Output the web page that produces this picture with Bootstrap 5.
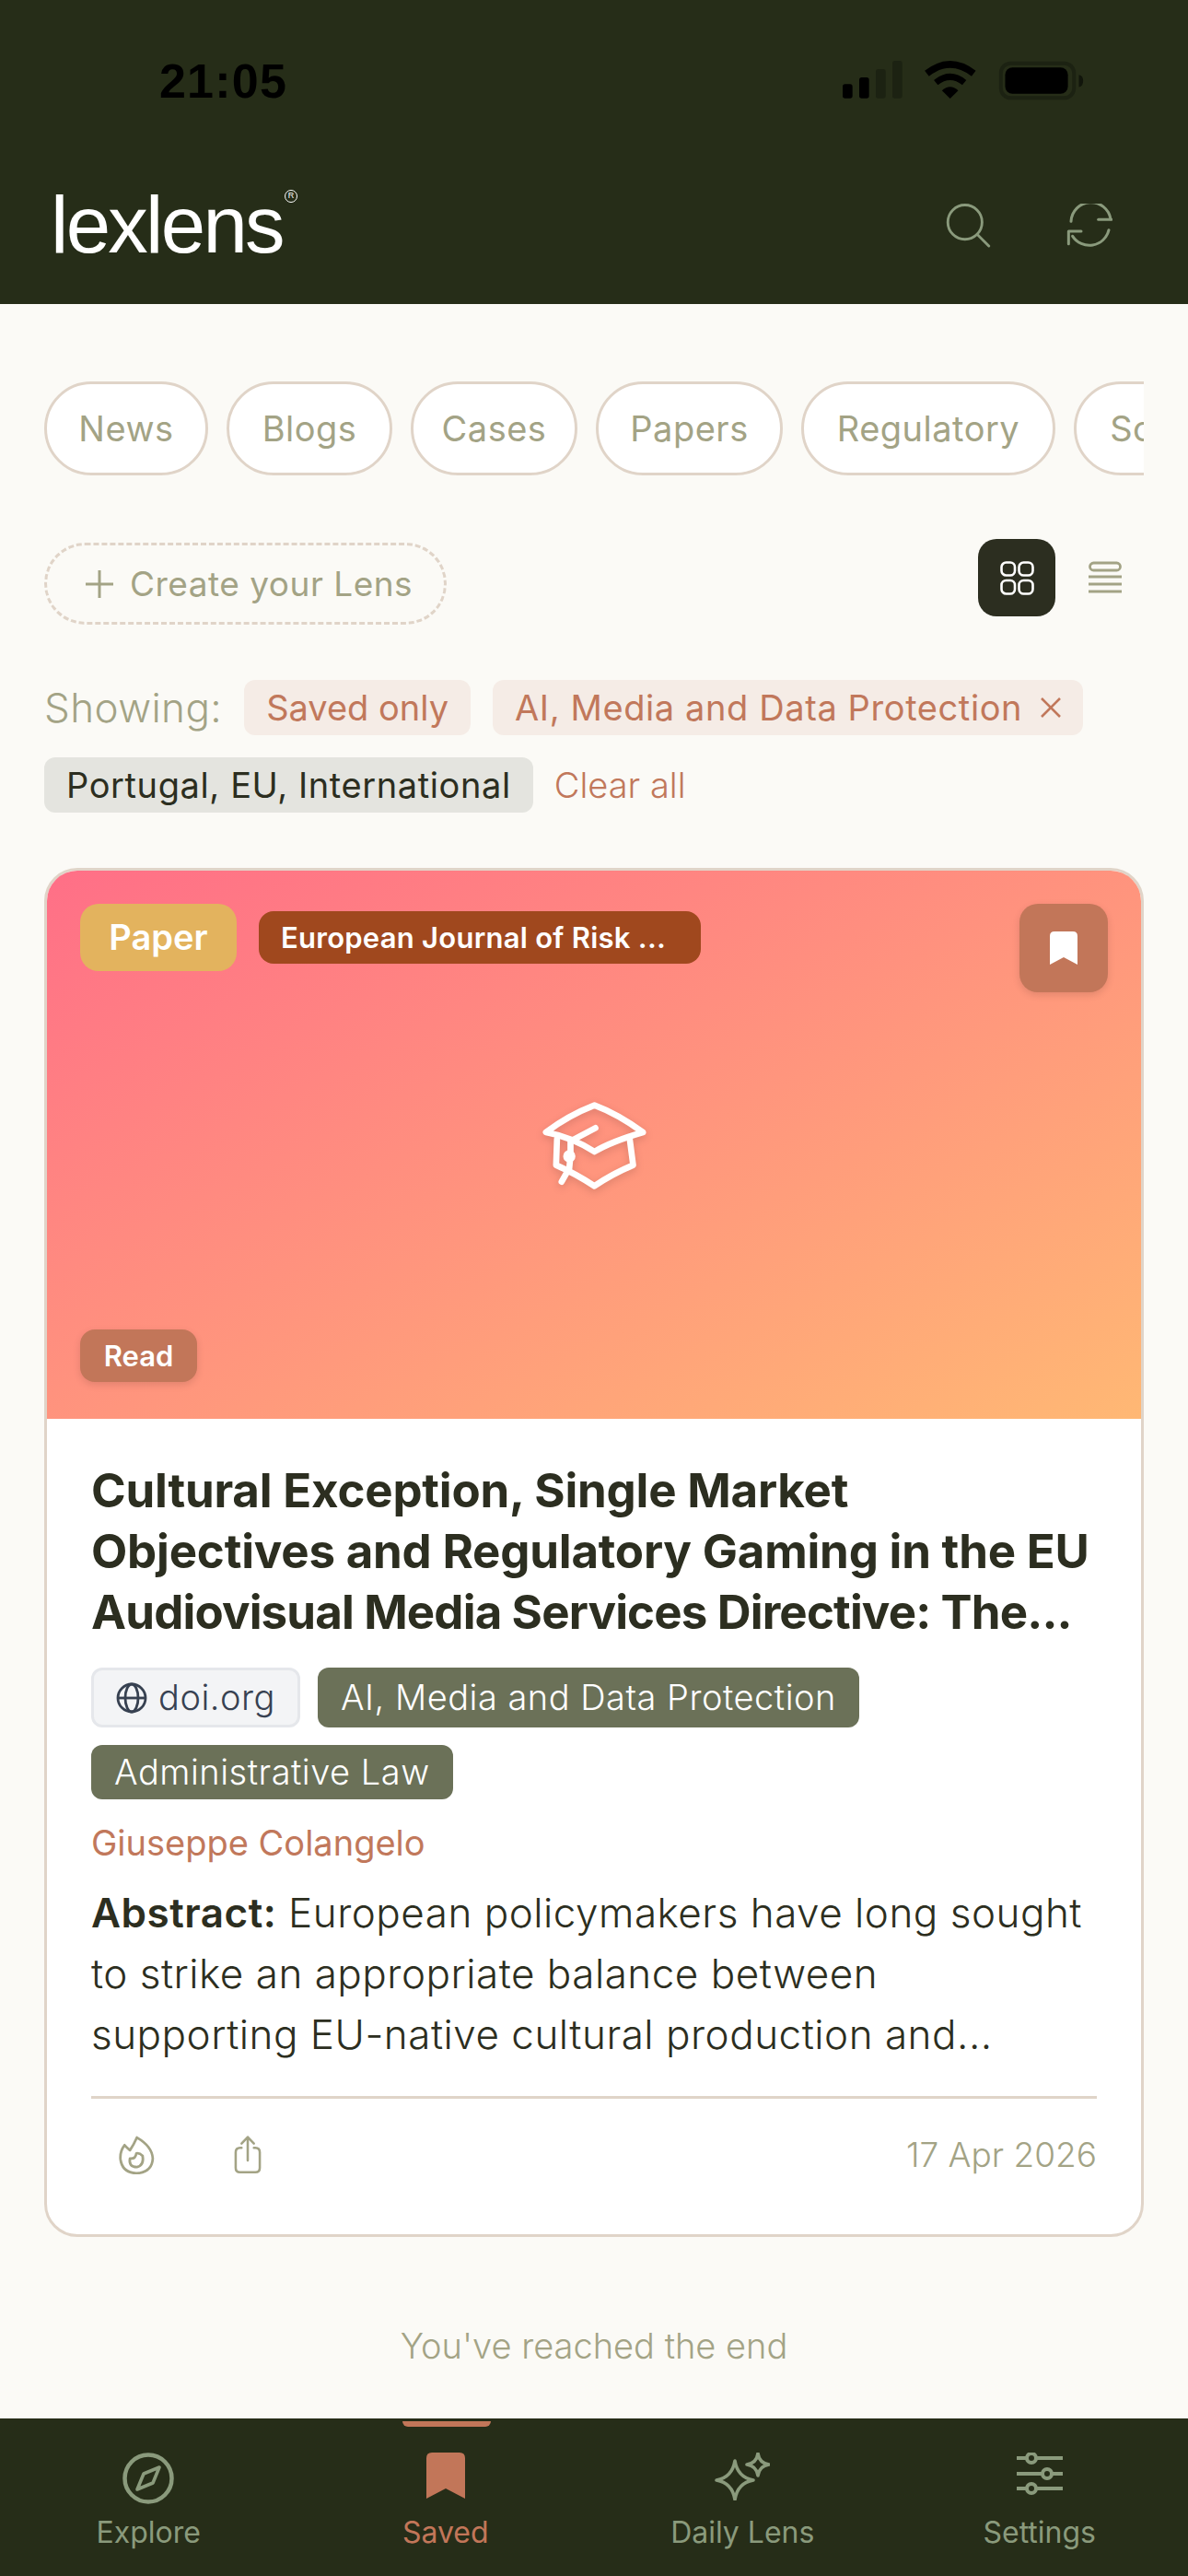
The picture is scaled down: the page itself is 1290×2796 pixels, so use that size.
<!DOCTYPE html>
<html lang="en">
<head>
  <meta charset="UTF-8" />
  <meta name="viewport" content="width=device-width, initial-scale=1.0"/>
  <title>lexlens</title>
  <link href="https://cdn.jsdelivr.net/npm/bootstrap@5.3.3/dist/css/bootstrap.min.css" rel="stylesheet"/>
  <script src="https://cdn.jsdelivr.net/npm/bootstrap@5.3.3/dist/js/bootstrap.bundle.min.js"></script>
  <style>
    body { background: #fbfaf6; font-family: Inter, "Noto Sans", sans-serif; color: #2c2e20; height: 2796px; overflow: hidden; }
    svg { display: block; }
    .app-head { background: #262d18; height: 330px; padding: 66px 82px 0 55px; }
    .clock { font: 700 52px/44px "Liberation Sans", sans-serif; color: #000; margin-left: 118px; letter-spacing: 1.2px; }
    .status-icons { gap: 23px; margin-right: 31px; }
    .logo-row { margin-top: 99px; }
    .logo { font: 400 87px/70px "Liberation Sans", sans-serif; color: #fff; letter-spacing: -2.7px; position: relative; }
    .logo-mark { width: 14px; height: 14px; border: 1.5px solid #fff; border-radius: 50%; font: 400 9px/11px "Liberation Sans", sans-serif; letter-spacing: 0; text-align: center; position: absolute; top: -3px; right: -16px; }
    .head-icons { gap: 82px; }
    .page-main { padding: 84px 48px 0; }
    .chip-row { gap: 20px; overflow: hidden; height: 102px; }
    .chip-pill { background: #fff; border: 3px solid #e0d4c8; color: #a3a385; font-size: 38px; line-height: 44px; padding: 0; height: 102px; flex: none; letter-spacing: .5px; font-weight: 400; }
    .chip-pill:nth-child(1) { width: 178px; }
    .chip-pill:nth-child(2) { width: 180px; }
    .chip-pill:nth-child(3) { width: 181px; }
    .chip-pill:nth-child(4) { width: 203px; }
    .chip-pill:nth-child(5) { width: 276px; }
    .chip-pill:nth-child(6) { width: 190px; }
    .tool-row { margin-top: 69px; height: 93px; }
    .lens-btn { border: 3px dashed #e0d4c8; color: #a3a385; font-size: 37px; letter-spacing: .5px; width: 437px; height: 89px; margin-top: 4px; gap: 18px; padding: 0 0 0 42px; white-space: nowrap; }
    .view-active { width: 84px; height: 84px; border-radius: 20px; background: #2c2e20; margin-right: 36px; }
    .view-list { margin-right: 24px; }
    .filter-row { gap: 24px 24px; margin-top: 60px; }
    .filter-label { font-size: 44px; letter-spacing: .4px; font-weight: 300; color: #a3a385; line-height: 60px; }
    .filter-tag { font-size: 38px; line-height: 60px; height: 60px; padding: 0 24px; border-radius: 12px; background: #f5ece6; color: #c1785b; gap: 20px; letter-spacing: .6px; }
    .filter-tag.is-saved { letter-spacing: 0; }
    .filter-tag.is-grey { background: #e4e4df; color: #2c2e20; }
    .clear-link { font-size: 38px; line-height: 60px; color: #c1785b; font-weight: 300; margin-left: -1px; }
    .lens-card { margin-top: 60px; border: 3px solid #e0d4c8; border-radius: 36px; height: 1486px; overflow: hidden; }
    .card-art { height: 595px; background: linear-gradient(to bottom right, #ff6f87 0%, #ffb874 100%); position: relative; }
    .art-tag { position: absolute; color: #fff; }
    .art-type { left: 36px; top: 36px; width: 170px; height: 73px; border-radius: 20px; background: #e3b35e; font-size: 38px; font-weight: 600; line-height: 73px; text-align: center; }
    .art-source { left: 230px; top: 44px; width: 480px; height: 57px; border-radius: 16px; background: #a0481e; font-size: 31px; letter-spacing: .25px; font-weight: 600; line-height: 57px; padding-left: 24px; white-space: nowrap; }
    .art-save { right: 36px; top: 36px; width: 96px; height: 96px; border-radius: 20px; background: #c27659; box-shadow: 0 3px 8px rgba(0,0,0,.12); }
    .art-read { left: 36px; top: 498px; width: 127px; height: 57px; border-radius: 16px; background: #c27659; font-size: 31px; font-weight: 600; line-height: 57px; text-align: center; box-shadow: 0 3px 8px rgba(0,0,0,.12); }
    .art-cap { position: absolute; left: 536px; top: 249px; filter: drop-shadow(0 3px 4px rgba(0,0,0,.14)); }
    .lens-body { padding: 45px 48px 0; }
    .lens-title { font-size: 51px; line-height: 66px; font-weight: 700; letter-spacing: -.2px; margin: 0; white-space: nowrap; color: #2c2e20; }
    .title-tail { letter-spacing: -.85px; }
    .meta-row { gap: 19px; margin-top: 27px; }
    .meta-tag { font-size: 38px; letter-spacing: .5px; line-height: 59px; padding: 0 25px; border-radius: 12px; background: #6b7158; color: #fff; font-weight: 300; white-space: nowrap; }
    .meta-site { padding: 0 24px; background: #f3f4f6; border: 3px solid #e5e7eb; color: #374151; gap: 12px; }
    .author-line { font-size: 38px; line-height: 44px; color: #c1785b; margin-top: 25px; }
    .abstract-text { font-size: 44px; line-height: 66px; font-weight: 300; margin: 21px 0 0; white-space: nowrap; letter-spacing: .5px; }
    .abstract-text b { font-weight: 600; }
    .lens-foot { border-top: 3px solid #e0d4c8; margin-top: 34px; padding: 33px 0 0 29px; }
    .foot-icons { gap: 86px; }
    .foot-date { font-size: 37px; font-weight: 300; color: #a3a385; }
    .end-note { font-size: 38px; font-weight: 300; color: #a3a385; text-align: center; margin-top: 96px; line-height: 44px; }
    .tab-bar { background: #262d18; height: 171px; position: absolute; left: 0; right: 0; top: 2625px; margin: 0; }
    .tab-cell { padding: 37px 0 0; color: #8a9a7c; font-size: 32px; line-height: 42px; position: relative; }
    .tab-icon { height: 58px; margin-bottom: 8px; }
    .tab-on { color: #c27659; }
    .tab-mark { position: absolute; top: 3px; left: 114px; width: 96px; height: 6px; background: #c27659; border-radius: 0 0 8px 8px; }
  </style>
</head>
<body>

  <!-- Top bar -->
  <header class="app-head">
    <div class="d-flex justify-content-between align-items-start">
      <div class="clock">21:05</div>
      <div class="d-flex status-icons">
        <svg width="65" height="41" viewBox="108 48 195 123"><rect x="108" y="124" width="32" height="46" rx="8"/><rect x="162" y="102" width="32" height="68" rx="8"/><rect x="216" y="75" width="32" height="95" rx="8" fill="#1c2212"/><rect x="270" y="48" width="32" height="122" rx="8" fill="#1c2212"/></svg>
        <svg width="58" height="41" viewBox="372 46 172 125"><path d="M457 171 430 144Q457 120 484 144Z"/><path d="M410 118Q457 80 504 118" fill="none" stroke="#000" stroke-width="21"/><path d="M380 88Q457 28 535 88" fill="none" stroke="#000" stroke-width="23"/></svg>
        <svg width="93" height="43" viewBox="612 44 280 130"><rect x="620" y="52" width="240" height="114" rx="32" fill="none" stroke="#1c2212" stroke-width="12"/><rect x="634" y="66" width="206" height="86" rx="24"/><path d="M876 90Q890 92 890 110T876 130Z" fill="#11150b"/></svg>
      </div>
    </div>
    <div class="d-flex justify-content-between align-items-center logo-row">
      <div class="logo">lexlens<span class="logo-mark">R</span></div>
      <div class="d-flex align-items-center head-icons">
        <svg width="50" height="49" viewBox="430 510 156 153" fill="none" stroke="#8a9a7c" stroke-width="9" stroke-linecap="round"><circle cx="498" cy="576" r="58"/><path d="M540 618 579 657"/></svg>
        <svg width="50" height="47" viewBox="830 516 150 141" fill="none" stroke="#8a9a7c" stroke-width="9" stroke-linecap="round" stroke-linejoin="round"><path d="M845 574A65 65 0 0 1 974 566"/><path d="M934 568H976"/><path d="M968 602A65 65 0 0 1 850 622"/><path d="M878 606H837V647"/></svg>
      </div>
    </div>
  </header>

  <main class="page-main">
    <!-- Category chips -->
    <div class="d-flex chip-row">
      <button type="button" class="btn rounded-pill chip-pill">News</button>
      <button type="button" class="btn rounded-pill chip-pill">Blogs</button>
      <button type="button" class="btn rounded-pill chip-pill">Cases</button>
      <button type="button" class="btn rounded-pill chip-pill">Papers</button>
      <button type="button" class="btn rounded-pill chip-pill">Regulatory</button>
      <button type="button" class="btn rounded-pill chip-pill">Social</button>
    </div>

    <div class="d-flex justify-content-between tool-row">
      <button type="button" class="btn rounded-pill d-flex align-items-center lens-btn">
        <svg width="30" height="30" viewBox="0 0 30 30" stroke="#a3a385" stroke-width="3"><path d="M15 0V30M0 15H30"/></svg>
        Create your Lens
      </button>
      <div class="d-flex align-items-start">
        <div class="view-active d-flex align-items-center justify-content-center">
          <svg width="37" height="37" viewBox="0 0 37 37" fill="none" stroke="#fff" stroke-width="2.6"><rect x="1.500" y="1.500" width="14.500" height="14" rx="5"/><rect x="20.500" y="1.500" width="15" height="14" rx="5"/><rect x="1.500" y="21" width="14.500" height="14.500" rx="5"/><rect x="20.500" y="21" width="15" height="14.500" rx="5"/></svg>
        </div>
        <svg class="mt-4 view-list" width="36" height="35" viewBox="0 0 36 35" fill="none" stroke="#a3a385" stroke-width="2.8"><rect x="1.500" y="2" width="33" height="8" rx="4"/><path d="M0 17H36M0 25H36M0 33H36"/></svg>
      </div>
    </div>

    <!-- Active filters -->
    <div class="d-flex flex-wrap align-items-center filter-row">
      <span class="filter-label">Showing:</span>
      <span class="filter-tag is-saved">Saved only</span>
      <span class="filter-tag d-flex align-items-center">AI, Media and Data Protection
        <svg width="22" height="22" viewBox="0 0 22 22" stroke="#c1785b" stroke-width="2.6"><path d="M1 1 21 21M21 1 1 21"/></svg>
      </span>
      <span class="filter-tag is-grey">Portugal, EU, International</span>
      <span class="clear-link">Clear all</span>
    </div>

    <!-- Result card -->
    <article class="card lens-card">
      <div class="card-art">
        <span class="art-tag art-type">Paper</span>
        <span class="art-tag art-source">European Journal of Risk ...</span>
        <span class="art-tag art-save d-flex align-items-center justify-content-center">
          <svg width="30" height="36" viewBox="0 0 30 36" fill="#fff"><path d="M0 5Q0 0 5 0H25Q30 0 30 5V36L15 28 0 36Z"/></svg>
        </span>
        <svg class="art-cap" width="117" height="100" viewBox="200 130 350 300" fill="none" stroke="#fff" stroke-width="20" stroke-linecap="round" stroke-linejoin="round">
          <path d="M375 147Q290 180 217 235Q300 250 375 298Q430 265 533 235Q450 175 375 147Z"/>
          <path d="M253 258 250 342Q310 368 375 410Q430 372 501 342L490 258"/>
          <path d="M378 221 297 264V310L293 352 268 396"/>
          <circle cx="293" cy="313" r="10" fill="#fff"/>
        </svg>
        <span class="art-tag art-read">Read</span>
      </div>
      <div class="card-body lens-body">
        <h3 class="lens-title">Cultural Exception, Single Market<br>Objectives and Regulatory Gaming in the EU<br><span class="title-tail">Audiovisual Media Services Directive: The...</span></h3>
        <div class="d-flex flex-wrap meta-row">
          <span class="meta-tag meta-site d-flex align-items-center">
            <svg width="34" height="34" viewBox="0 0 34 34" fill="none" stroke="#374151" stroke-width="2.8"><circle cx="17" cy="17" r="15"/><ellipse cx="17" cy="17" rx="7" ry="15"/><path d="M2 17H32"/></svg>
            doi.org
          </span>
          <span class="meta-tag d-flex align-items-center">AI, Media and Data Protection</span>
          <span class="meta-tag">Administrative Law</span>
        </div>
        <div class="author-line">Giuseppe Colangelo</div>
        <p class="abstract-text"><b>Abstract:</b> European policymakers have long sought<br>to strike an appropriate balance between<br>supporting EU-native cultural production and...</p>
        <div class="d-flex justify-content-between align-items-center lens-foot">
          <div class="d-flex align-items-center foot-icons">
            <svg width="40" height="42" viewBox="114 56 112 122" fill="none" stroke="#a3a385" stroke-width="8" stroke-linejoin="round"><path d="M172 62Q162 85 150 102Q140 94 133 86Q118 105 120 130Q125 172 170 175Q220 172 222 128Q220 90 172 62Z"/><path d="M150 128Q145 155 172 155Q195 150 190 120Q180 110 170 112Q168 130 150 128Z"/></svg>
            <svg width="30" height="46" viewBox="484 56 94 130" fill="none" stroke="#a3a385" stroke-width="8" stroke-linecap="round" stroke-linejoin="round"><path d="M510 97H505Q490 97 490 112V165Q490 180 505 180H557Q572 180 572 165V112Q572 97 557 97H552"/><path d="M531 140V62M510 82 531 60 552 82"/></svg>
          </div>
          <span class="foot-date">17 Apr 2026</span>
        </div>
      </div>
    </article>

    <div class="end-note">You've reached the end</div>
  </main>

  <!-- Bottom tabs -->
  <nav class="row g-0 text-center tab-bar">
    <div class="col-3 tab-cell">
      <div class="tab-icon d-flex justify-content-center">
        <svg width="56" height="56" viewBox="0 0 56 56" fill="none" stroke="#8a9a7c" stroke-width="4.5" stroke-linejoin="round"><circle cx="28" cy="28" r="25.500"/><path d="M40 16 33 33 16 40 23 23Z" stroke-width="3.6"/></svg>
      </div>
      Explore
    </div>
    <div class="col-3 tab-cell tab-on">
      <span class="tab-mark"></span>
      <div class="tab-icon d-flex justify-content-center">
        <svg width="42" height="50" viewBox="0 0 42 50" fill="#c27659"><path d="M0 6Q0 0 6 0H36Q42 0 42 6V50L21 39 0 50Z"/></svg>
      </div>
      Saved
    </div>
    <div class="col-3 tab-cell">
      <div class="tab-icon d-flex justify-content-center">
        <svg width="60" height="52" viewBox="0 0 60 52" fill="none" stroke="#8a9a7c" stroke-width="3.6" stroke-linejoin="round"><path d="M22 9Q25 27 42 30 25 33 22 51 19 33 2 30 19 27 22 9Z"/><path d="M47 1Q48.500 11.500 59 13 48.500 14.500 47 25 45.500 14.500 35 13 45.500 11.500 47 1Z"/></svg>
      </div>
      Daily Lens
    </div>
    <div class="col-3 tab-cell">
      <div class="tab-icon d-flex justify-content-center">
        <svg width="50" height="46" viewBox="0 0 50 46" fill="none" stroke="#8a9a7c" stroke-width="4"><path d="M0 6H50M0 23H50M0 39H50"/><circle cx="16" cy="6" r="5" fill="#262d18"/><circle cx="33" cy="23" r="5" fill="#262d18"/><circle cx="16" cy="39" r="5" fill="#262d18"/></svg>
      </div>
      Settings
    </div>
  </nav>

</body>
</html>
